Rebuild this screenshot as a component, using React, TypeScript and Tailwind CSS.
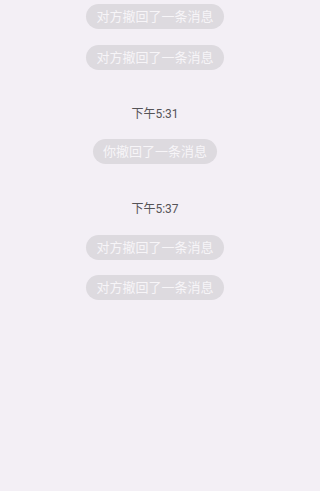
import React from 'react';

type Item =
  | { kind: 'recall'; text: string; mt: string }
  | { kind: 'time'; text: string; mt: string };

const items: Item[] = [
  { kind: 'recall', text: '对方撤回了一条消息', mt: 'mt-[4px]' },
  { kind: 'recall', text: '对方撤回了一条消息', mt: 'mt-[16px]' },
  { kind: 'time', text: '下午5:31', mt: 'mt-[36px]' },
  { kind: 'recall', text: '你撤回了一条消息', mt: 'mt-[17px]' },
  { kind: 'time', text: '下午5:37', mt: 'mt-[37px]' },
  { kind: 'recall', text: '对方撤回了一条消息', mt: 'mt-[18px]' },
  { kind: 'recall', text: '对方撤回了一条消息', mt: 'mt-[15px]' },
];

export default function App() {
  return (
    <div
      className="w-[320px] h-[491px] bg-[#f3eff5] flex flex-col items-center pr-[10px] overflow-hidden"
      style={{ fontFamily: 'Roboto, "Noto Sans CJK SC", sans-serif' }}
    >
      {items.map((item, i) =>
        item.kind === 'time' ? (
          <div key={i} className={`${item.mt} h-[16px] leading-[16px] text-[12px] text-[#555357]`}>
            {item.text}
          </div>
        ) : (
          <div
            key={i}
            className={`${item.mt} h-[25px] px-[10px] rounded-full bg-[#dddadf] flex items-center text-[13px] leading-none text-[#f7f5f8]`}
          >
            {item.text}
          </div>
        )
      )}
    </div>
  );
}
